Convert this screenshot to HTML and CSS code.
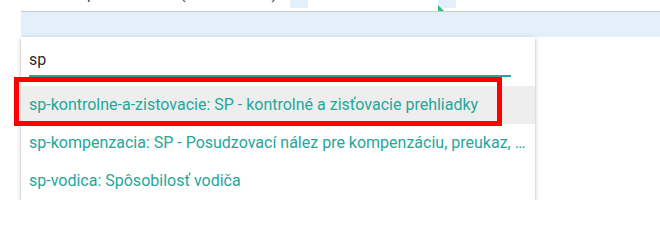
FILE: index.html
```html
<!DOCTYPE html>
<html lang="sk">
  <head>
    <meta charset="UTF-8" />
    <meta name="viewport" content="width=device-width, initial-scale=1.0" />
    <title>Vyhľadávanie</title>
    <link rel="stylesheet" href="styles.css">
  </head>
  <body>
    <div class="topLine">
      <div class="labelClip">
        <span class="glyph g1">p</span>
        <span class="glyph g2">(</span>
        <span class="glyph g3">)</span>
      </div>
      <div class="chip chip1"></div>
      <div class="chip chip2"><span class="marker"></span></div>
    </div>
    <div class="fieldBand"></div>
    <div id="dropdown">
      <div class="searchBox">
        <input id="searchInput" type="text" value="sp" />
      </div>
      <ul class="options">
        <li class="option active">
          sp-kontrolne-a-zistovacie: SP - kontrolné a zisťovacie prehliadky
          <span class="mark"></span>
        </li>
        <li class="option">sp-kompenzacia: SP - Posudzovací nález pre kompenzáciu, preukaz, ...</li>
        <li class="option">sp-vodica: Spôsobilosť vodiča</li>
      </ul>
    </div>
  </body>
</html>
```

FILE: styles.css
```css
body {
  margin: 0;
  background-color: #ffffff;
  font-family: Roboto, "Liberation Sans", sans-serif;
}

.topLine {
  display: flex;
  height: 11px;
  overflow: hidden;
}

.labelClip {
  display: flex;
  width: 290px;
  height: 3px;
  overflow: hidden;
}

.glyph {
  display: block;
  font-size: 15px;
  line-height: 15px;
  margin-top: -13px;
  color: #444444;
}

.g1 {
  margin-left: 87px;
}

.g2 {
  margin-left: 85px;
}

.g3 {
  margin-left: 86px;
}

.chip {
  width: 18px;
  height: 8px;
  background-color: #e3f0fb;
}

.chip2 {
  margin-left: 130px;
  position: relative;
}

.marker {
  position: absolute;
  left: 0;
  top: 5px;
  width: 0;
  height: 0;
  border-left: 6px solid #2bbf7e;
  border-top: 6px solid transparent;
}

.fieldBand {
  margin-left: 21px;
  height: 25px;
  border-top: 1px solid #c9c9c9;
  background-color: #e3f0fb;
}

#dropdown {
  margin-left: 21px;
  width: 514px;
  background-color: #ffffff;
  box-shadow: 0 2px 2px 0 rgba(0, 0, 0, 0.14), 0 3px 1px -2px rgba(0, 0, 0, 0.12), 0 1px 5px 0 rgba(0, 0, 0, 0.2);
}

.searchBox {
  padding: 0 8px;
  margin-bottom: 9px;
}

#searchInput {
  display: block;
  box-sizing: content-box;
  width: 482px;
  height: 32px;
  margin: 0;
  padding: 6px 0 0;
  border: none;
  border-bottom: 2px solid #26a69a;
  outline: none;
  font-family: Roboto, "Liberation Sans", sans-serif;
  font-size: 16px;
  color: rgba(0, 0, 0, 0.87);
}

.options {
  list-style-type: none;
  margin: 0;
  padding: 0;
}

.option {
  height: 38px;
  padding: 0 8px;
  line-height: 38px;
  font-size: 16px;
  color: #26a69a;
  white-space: nowrap;
  overflow: hidden;
  text-overflow: ellipsis;
}

.active {
  position: relative;
  overflow: visible;
  background-color: #eeeeee;
}

.mark {
  position: absolute;
  left: -7px;
  top: -9px;
  width: 478px;
  height: 39px;
  border: 5px solid #ff0000;
}
```
